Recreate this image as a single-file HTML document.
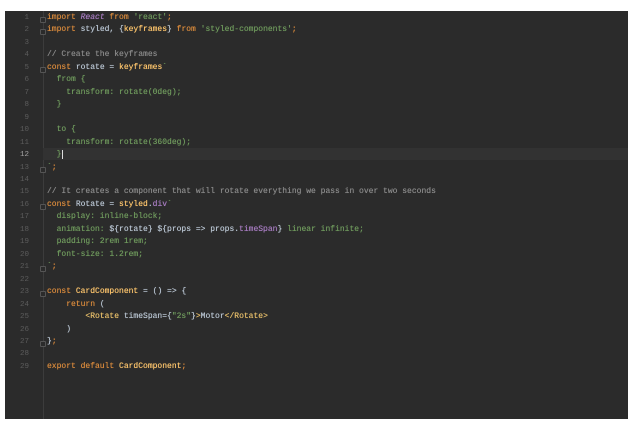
<!DOCTYPE html><html><head><style>
body{margin:0;width:640px;height:427px;background:#fff;overflow:hidden;position:relative;font-family:"Liberation Mono",monospace}
#ed{position:absolute;left:5px;top:11px;width:623px;height:408px;background:#2b2b2b}
#sep{position:absolute;left:38px;top:0;width:1px;height:408px;background:#3c3c3c}
.hl{position:absolute;left:38px;top:137px;width:585px;height:12px;background:#323232}
.ln{position:absolute;left:0;width:24px;text-align:right;color:#5c5c5c;font-size:7.5px}
.c{position:absolute;left:42px;font-size:8px;white-space:pre;color:#b9c5d2;text-shadow:0 0 0.4px currentColor}
.f{position:absolute;left:35px;width:4px;height:4px;border:1px solid #555;border-radius:1px;background:#2b2b2b}
.k{color:#d98a3c}.s{color:#6f9a5d}.y{color:#ffc66d}.p{color:#a77cc0}.g{color:#8a8a8a}.i{color:#a77cc0;font-style:italic}.t{color:#e8bf6a}
</style></head><body><div id="ed"><div id="sep"></div><div class="hl"></div>
<div id="lines"></div></div>
<script>
var L=[
'<span class="k">import </span><span class="i">React</span><span class="k"> from </span><span class="s">\'react\'</span><span class="k">;</span>',
'<span class="k">import </span>styled, {<span class="y">keyframes</span>} <span class="k">from </span><span class="s">\'styled-components\'</span><span class="k">;</span>',
'',
'<span class="g">// Create the keyframes</span>',
'<span class="k">const </span>rotate = <span class="y">keyframes</span><span class="s">`</span>',
'<span class="s">  from {</span>',
'<span class="s">    transform: rotate(0deg);</span>',
'<span class="s">  }</span>',
'',
'<span class="s">  to {</span>',
'<span class="s">    transform: rotate(360deg);</span>',
'<span class="s">  }</span>',
'<span class="s">`</span><span class="k">;</span>',
'',
'<span class="g">// It creates a component that will rotate everything we pass in over two seconds</span>',
'<span class="k">const </span>Rotate = <span class="y">styled</span>.<span class="p">div</span><span class="s">`</span>',
'<span class="s">  display: inline-block;</span>',
'<span class="s">  animation: </span>${rotate} ${props =&gt; props.<span class="p">timeSpan</span>}<span class="s"> linear infinite;</span>',
'<span class="s">  padding: 2rem 1rem;</span>',
'<span class="s">  font-size: 1.2rem;</span>',
'<span class="s">`</span><span class="k">;</span>',
'',
'<span class="k">const </span><span class="y">CardComponent</span> = () =&gt; {',
'    <span class="k">return </span>(',
'        <span class="t">&lt;Rotate </span>timeSpan={<span class="s">"2s"</span>}<span class="t">&gt;</span>Motor<span class="t">&lt;/Rotate&gt;</span>',
'    )',
'}<span class="k">;</span>',
'',
'<span class="k">export default </span><span class="y">CardComponent</span><span class="k">;</span>'];
var folds=[0,1,4,12,15,20,22,26];
var h='';for(var n=0;n<L.length;n++){var t=2+n*12.46;h+='<div class="ln" style="top:'+(t+1)+'px'+(n==11?';color:#a4a3a3':'')+'">'+(n+1)+'</div><div class="c" style="top:'+t+'px">'+L[n]+'</div>';if(folds.indexOf(n)>=0)h+='<div class="f" style="top:'+(t+4)+'px"></div>';}
h+='<div style="position:absolute;left:57px;top:139px;width:1px;height:9px;background:#ddd"></div>';
document.getElementById('lines').innerHTML=h;
</script></body></html>
